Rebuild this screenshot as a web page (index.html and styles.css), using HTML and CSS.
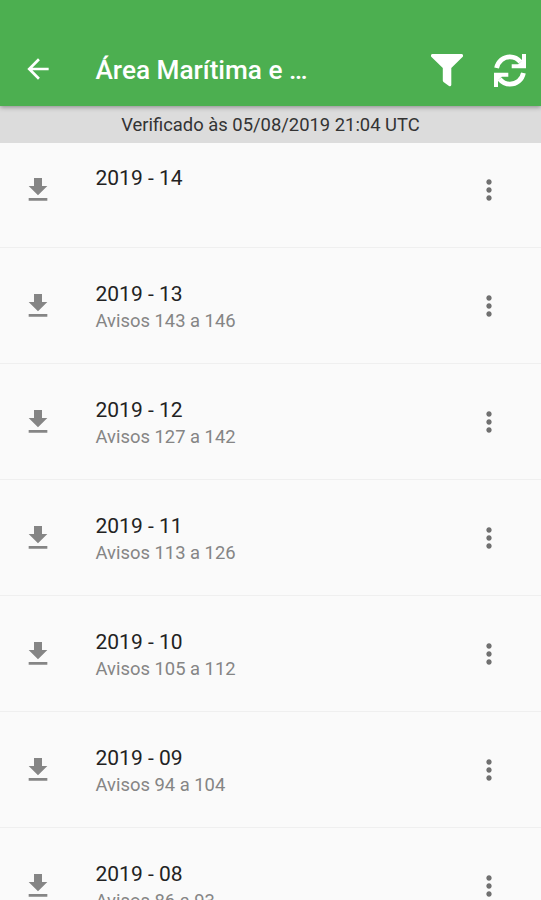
FILE: index.html
```
<!DOCTYPE html>
<html lang="pt">
<head>
    <meta charset="UTF-8">
    <meta name="viewport" content="width=device-width, initial-scale=1.0">
    <title>Área Marítima</title>
    <link rel="stylesheet" href="styles.css">
</head>
<body>
    <svg class="defs">
        <symbol id="download" viewBox="0 0 24 24"><path d="M19 9h-4V3H9v6H5l7 7 7-7zM5 18v2h14v-2H5z"/></symbol>
        <symbol id="more" viewBox="0 0 24 24"><path d="M12 8c1.1 0 2-.9 2-2s-.9-2-2-2-2 .9-2 2 .9 2 2 2zm0 2c-1.1 0-2 .9-2 2s.9 2 2 2 2-.9 2-2-.9-2-2-2zm0 6c-1.1 0-2 .9-2 2s.9 2 2 2 2-.9 2-2-.9-2-2-2z"/></symbol>
    </svg>
    <header>
        <svg class="back" viewBox="0 0 24 24"><path d="M20 11H7.83l5.59-5.59L12 4l-8 8 8 8 1.41-1.41L7.83 13H20v-2z"/></svg>
        <h1>Área Marítima e …</h1>
        <svg class="action" viewBox="0 0 32 33"><path d="M1 0h30q2 1 .5 3L20.300 14v17q-.5 2-2.300 1l-5.500-4q-.7-.6-.7-1.500V14L.5 3Q-1 1 1 0z"/></svg>
        <svg class="action refresh" viewBox="0 0 32 33">
            <path class="arc" d="M2.600 14C4 7 9.500 2.800 16 2.800c4.500 0 8 2 10.500 5.200M29.400 19C28 26 22.500 30.200 16 30.200c-4.500 0-8-2-10.500-5.200"/>
            <path d="M32 0v14.300H17.700v-4.100h6.500L28 6.500V0zM0 33V18.700h14.300v4.100H7.800L4 26.500V33z"/>
        </svg>
    </header>
    <div class="status">Verificado às 05/08/2019 21:04 UTC</div>
    <main class="list" id="list"></main>

    <script>
        const items = [
            ["2019 - 14", ""],
            ["2019 - 13", "Avisos 143 a 146"],
            ["2019 - 12", "Avisos 127 a 142"],
            ["2019 - 11", "Avisos 113 a 126"],
            ["2019 - 10", "Avisos 105 a 112"],
            ["2019 - 09", "Avisos 94 a 104"],
            ["2019 - 08", "Avisos 86 a 93"],
        ];

        document.getElementById('list').innerHTML = items.map(([title, notices]) => `
            <div class="item">
                <svg class="icon"><use href="#download"/></svg>
                <div class="item-text">
                    <div class="item-title">${title}</div>
                    <div class="item-notices">${notices}</div>
                </div>
                <svg class="icon more"><use href="#more"/></svg>
            </div>`).join('');
    </script>
</body>
</html>
```
FILE: styles.css
```
body {
    font-family: Roboto, sans-serif;
    margin: 0;
    background: #fafafa;
    height: 100vh;
    overflow: hidden;
    display: flex;
    flex-direction: column;
}
.defs {
    display: none;
}
header {
    background-color: #4caf50;
    color: white;
    fill: white;
    height: 74px;
    flex-shrink: 0;
    padding: 32px 15px 0 21.5px;
    display: flex;
    align-items: center;
    box-shadow: 0 1px 5px rgba(0, 0, 0, 0.4);
    position: relative;
    z-index: 1;
}
.back {
    width: 32px;
    height: 32px;
    margin-right: 42px;
}
h1 {
    flex: 1;
    margin: 2px 0 0;
    font-size: 26.2px;
    font-weight: 500;
    white-space: nowrap;
}
.action {
    width: 32px;
    height: 33px;
    margin-top: 3px;
}
.refresh {
    margin-left: 31px;
}
.arc {
    fill: none;
    stroke: white;
    stroke-width: 4.8;
}
.status {
    height: 37px;
    line-height: 38px;
    flex-shrink: 0;
    background: #dcdcdc;
    color: #333;
    text-align: center;
    font-size: 18.4px;
}
.list {
    flex: 1;
    overflow: hidden;
}
.item {
    height: 116px;
    box-sizing: border-box;
    padding: 0 36px 0 21.5px;
    border-bottom: 1px solid #efefef;
    display: flex;
    align-items: center;
}
.item:first-child {
    margin-top: -11px;
}
.icon {
    width: 32px;
    height: 32px;
    flex-shrink: 0;
    fill: #858585;
}
.more {
    fill: #707070;
}
.item-text {
    flex: 1;
    height: 52px;
    margin-left: 42px;
}
.item-title {
    font-size: 21px;
    line-height: 28px;
    color: #222;
}
.item-notices {
    font-size: 18.4px;
    line-height: 26px;
    color: #858585;
}
```
